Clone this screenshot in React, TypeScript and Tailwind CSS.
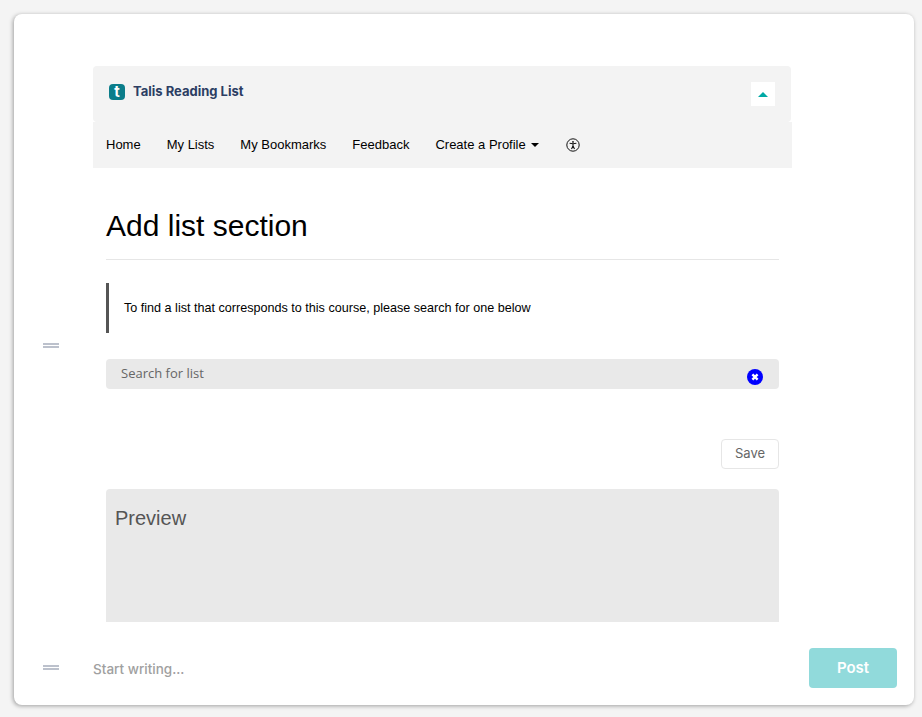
import { ChevronDown } from "lucide-react";

const navItems = ["Home", "My Lists", "My Bookmarks", "Feedback"];

const DragHandle = () => (
  <div className="flex w-4 flex-col gap-[1px]">
    <div className="h-[2px] bg-[#bcc1cc]" />
    <div className="h-[2px] bg-[#bcc1cc]" />
  </div>
);

const AccessIcon = () => (
  <svg viewBox="0 0 14 14" className="h-[14px] w-[14px]" fill="none" stroke="#111" strokeWidth="1">
    <circle cx="7" cy="7" r="6.2" />
    <circle cx="7" cy="3.9" r="0.9" fill="#111" stroke="none" />
    <path d="M3.6 5.2 L7 5.8 L10.4 5.2 M7 5.8 V8 M7 8 L5.5 11 M7 8 L8.5 11" strokeWidth="1.1" />
  </svg>
);

const App = () => {
  return (
    <div className="h-[717px] w-[922px] overflow-hidden bg-[#f4f4f4] pl-[14px] pt-[14px] font-['Liberation_Sans',sans-serif]">
      <div className="h-[691px] w-[900px] rounded-lg bg-white shadow-[-1px_1px_4px_rgba(0,0,0,0.35)]">
        <div className="flex h-[608px]">
          <div className="w-[79px] pl-[29px] pt-[329px]">
            <DragHandle />
          </div>

          <div className="w-[699px] pt-[52px]">
            <div className="flex h-[56px] w-[698px] items-start justify-between rounded-t rounded-b-sm bg-[#f3f3f3] pl-4 pr-4">
              <div className="flex items-center gap-2 pt-4">
                <div className="flex h-4 w-4 items-center justify-center rounded-sm bg-[#0b7d8a] font-['Inter',sans-serif] text-[15px] font-bold leading-none text-white">
                  t
                </div>
                <span className="font-['Inter',sans-serif] text-[13px] font-bold text-[#2c3e63]">Talis Reading List</span>
              </div>
              <div className="mt-4 flex h-6 w-6 items-center justify-center bg-white">
                <div className="h-0 w-0 border-x-[5px] border-b-[5px] border-x-transparent border-b-[#00a9a5]" />
              </div>
            </div>

            <nav className="flex h-[46px] items-center gap-[26px] bg-[#f3f3f3] px-[13px] text-[13px] text-black">
              {navItems.map((item) => (
                <span key={item}>{item}</span>
              ))}
              <span className="flex items-center gap-[5px]">
                Create a Profile
                <span className="h-0 w-0 border-x-[4px] border-t-[4px] border-x-transparent border-t-black" />
              </span>
              <span className="ml-[1px]"><AccessIcon /></span>
            </nav>

            <div className="h-[454px] overflow-hidden px-[13px]">
              <h1 className="flex h-[92px] items-center border-b border-[#e6e6e6] pt-[24px] pb-[0px] text-[30px] text-black">
                Add list section
              </h1>

              <div className="mt-[23px] flex h-[50px] items-center border-l-[3px] border-[#555] pl-[15px] text-[12.6px] text-black">
                To find a list that corresponds to this course, please search for one below
              </div>

              <div className="mt-[26px] flex h-[30px] items-center justify-between rounded-sm bg-[#e9e9e9] pl-[15px] pr-4 font-['Open_Sans',sans-serif] text-[13px] text-[#666]">
                <span>Search for list</span>
                <svg viewBox="0 0 16 16" className="mt-[6px] h-4 w-4 -mr-[0px]">
                  <circle cx="8" cy="8" r="8" fill="#0000ff" />
                  <path d="M5.4 5.4 L10.6 10.6 M10.6 5.4 L5.4 10.6" stroke="#fff" strokeWidth="2.4" />
                </svg>
              </div>

              <div className="mt-[50px] flex justify-end">
                <button className="h-[30px] w-[58px] rounded-sm border border-[#e6e6e6] bg-white font-['Inter',sans-serif] text-[13px] text-[#666]">
                  Save
                </button>
              </div>

              <div className="mt-5 h-[200px] rounded bg-[#e9e9e9] px-[9px] pt-[17px] text-[20px] leading-6 text-[#555]">
                Preview
              </div>
            </div>
          </div>
        </div>

        <div className="flex h-[83px] items-start">
          <div className="w-[79px] pl-[29px] pt-[43px]">
            <DragHandle />
          </div>
          <div className="flex-1 pt-[37px] font-['Inter',sans-serif] text-[13.5px] font-medium text-[#a0a0a0]">
            Start writing...
          </div>
          <button className="mr-[17px] mt-[26px] h-10 w-[88px] rounded bg-[#91dadb] font-['Inter',sans-serif] text-[15px] font-semibold text-white">
            Post
          </button>
        </div>
      </div>
    </div>
  );
};

export default App;
